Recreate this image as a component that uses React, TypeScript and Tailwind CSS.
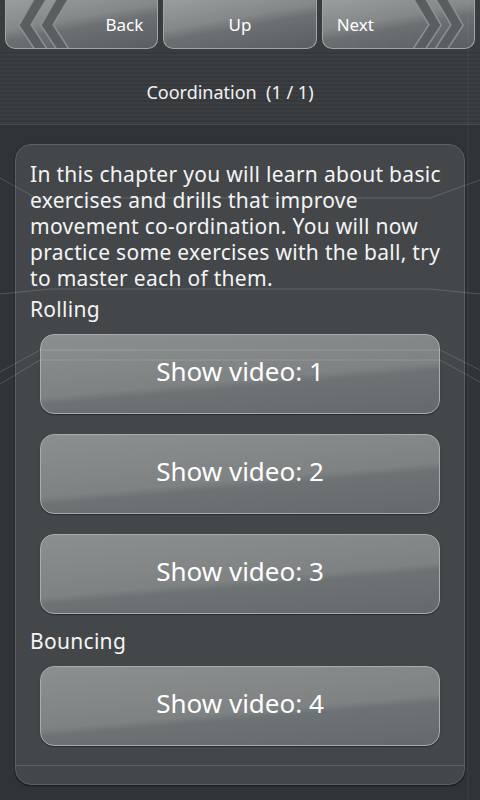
import React from 'react';

const font = { fontFamily: '"Noto Sans", "Open Sans", sans-serif' };

const Chevrons: React.FC<{ dir: 'left' | 'right' }> = ({ dir }) => {
  const pts = dir === 'left'
    ? ['M36 -4 L19 25 L38 54', 'M58 -4 L41 25 L60 54']
    : ['M0 -4 L17 25 L-2 54', 'M22 -4 L39 25 L20 54'];
  return (
    <svg width="64" height="50" viewBox="0 0 64 50" className="absolute top-0 pointer-events-none" style={dir === 'left' ? { left: 0 } : { right: 0 }}>
      <g transform={dir === 'right' ? 'translate(8 0)' : undefined}>
        {pts.map((d) => (
          <g key={d}>
            <path d={d} fill="none" stroke="#8e9193" strokeWidth="12" strokeLinejoin="miter" />
            <path d={d} fill="none" stroke="#5a5e60" strokeWidth="9" strokeLinejoin="miter" />
          </g>
        ))}
      </g>
    </svg>
  );
};

const NavButton: React.FC<{ label: string; align: 'left' | 'center' | 'right' }> = ({ label, align }) => (
  <div className="relative flex-1 h-[49px] rounded-b-[10px] border border-t-0 border-[#a2a5a6] bg-[linear-gradient(170deg,#9a9d9e_0%,#858889_40%,#6c7072_55%,#5a5e60_100%)] overflow-hidden flex items-center pt-[2px]">
    {align === 'left' && <Chevrons dir="left" />}
    {align === 'right' && <Chevrons dir="right" />}
    <span
      className={`relative w-full text-[17px] text-white ${align === 'left' ? 'text-right pr-[14px]' : align === 'right' ? 'text-left pl-[14px]' : 'text-center'}`}
      style={font}
    >
      {label}
    </span>
  </div>
);

const VideoButton: React.FC<{ n: number }> = ({ n }) => (
  <div className="mx-[24px] h-[80px] rounded-[14px] border border-[#a8acad] bg-[linear-gradient(175deg,#8c8f90_0%,#7e8283_55%,#6d7274_62%,#65696b_100%)] flex items-center justify-center pb-[6px] shadow-[0_1px_1px_rgba(0,0,0,0.4)]">
    <span className="text-[26px] leading-[32px] text-white" style={font}>Show video: {n}</span>
  </div>
);

export default function App() {
  return (
    <div className="relative w-[480px] h-[800px] overflow-hidden bg-[#303437]" style={font}>
      {/* top nav */}
      <div className="flex gap-[5px] px-[5px] h-[52px] bg-[#393d40]">
        <NavButton label="Back" align="left" />
        <NavButton label="Up" align="center" />
        <NavButton label="Next" align="right" />
      </div>

      {/* title */}
      <div className="h-[73px] flex items-center justify-center pt-[9px] pr-[20px] border-b border-[#45494c] bg-[repeating-linear-gradient(0deg,#3b3f42_0px,#3b3f42_2px,#36393c_2px,#36393c_4px)]">
        <span className="text-[18px] text-[#f2f2f2] whitespace-pre">Coordination  (1 / 1)</span>
      </div>

      {/* panel */}
      <div className="mx-[15px] mt-[19px] h-[641px] rounded-[16px] border border-[#5c6063] bg-[#43474a] shadow-[0_1px_2px_rgba(0,0,0,0.6)] overflow-hidden">
        <div className="h-[621px] overflow-hidden pt-[16px] border-b border-[#5a5e61]">
          <p className="px-[14px] text-[21px] leading-[26px] tracking-[0.3px] text-[#f4f4f4]">
            In this chapter you will learn about basic exercises and drills that improve movement co-ordination. You will now practice some exercises with the ball, try to master each of them.
          </p>
          <p className="px-[14px] mt-[5px] text-[21px] leading-[26px] tracking-[0.3px] text-[#f4f4f4]">Rolling</p>
          <div className="mt-[12px] flex flex-col gap-[20px]">
            <VideoButton n={1} />
            <VideoButton n={2} />
            <VideoButton n={3} />
          </div>
          <p className="px-[14px] mt-[14px] text-[21px] leading-[26px] tracking-[0.3px] text-[#f4f4f4]">Bouncing</p>
          <div className="mt-[12px] flex flex-col gap-[20px]">
            <VideoButton n={4} />
          </div>
        </div>
      </div>

      {/* decorative background lines */}
      <svg className="absolute inset-0 pointer-events-none" width="480" height="800" viewBox="0 0 480 800">
        <g fill="none" stroke="#ffffff" strokeOpacity="0.16" strokeWidth="1">
          <path d="M0 178 L36 198 L430 198 L480 180" />
          <path d="M0 294 L50 289 L430 289 L480 294" />
          <path d="M0 372 L40 350 L440 350 L480 370" />
          <path d="M0 384 L40 360 L440 360 L480 382" />
          <path d="M468 0 L468 800" strokeOpacity="0.06" />
        </g>
      </svg>
    </div>
  );
}
